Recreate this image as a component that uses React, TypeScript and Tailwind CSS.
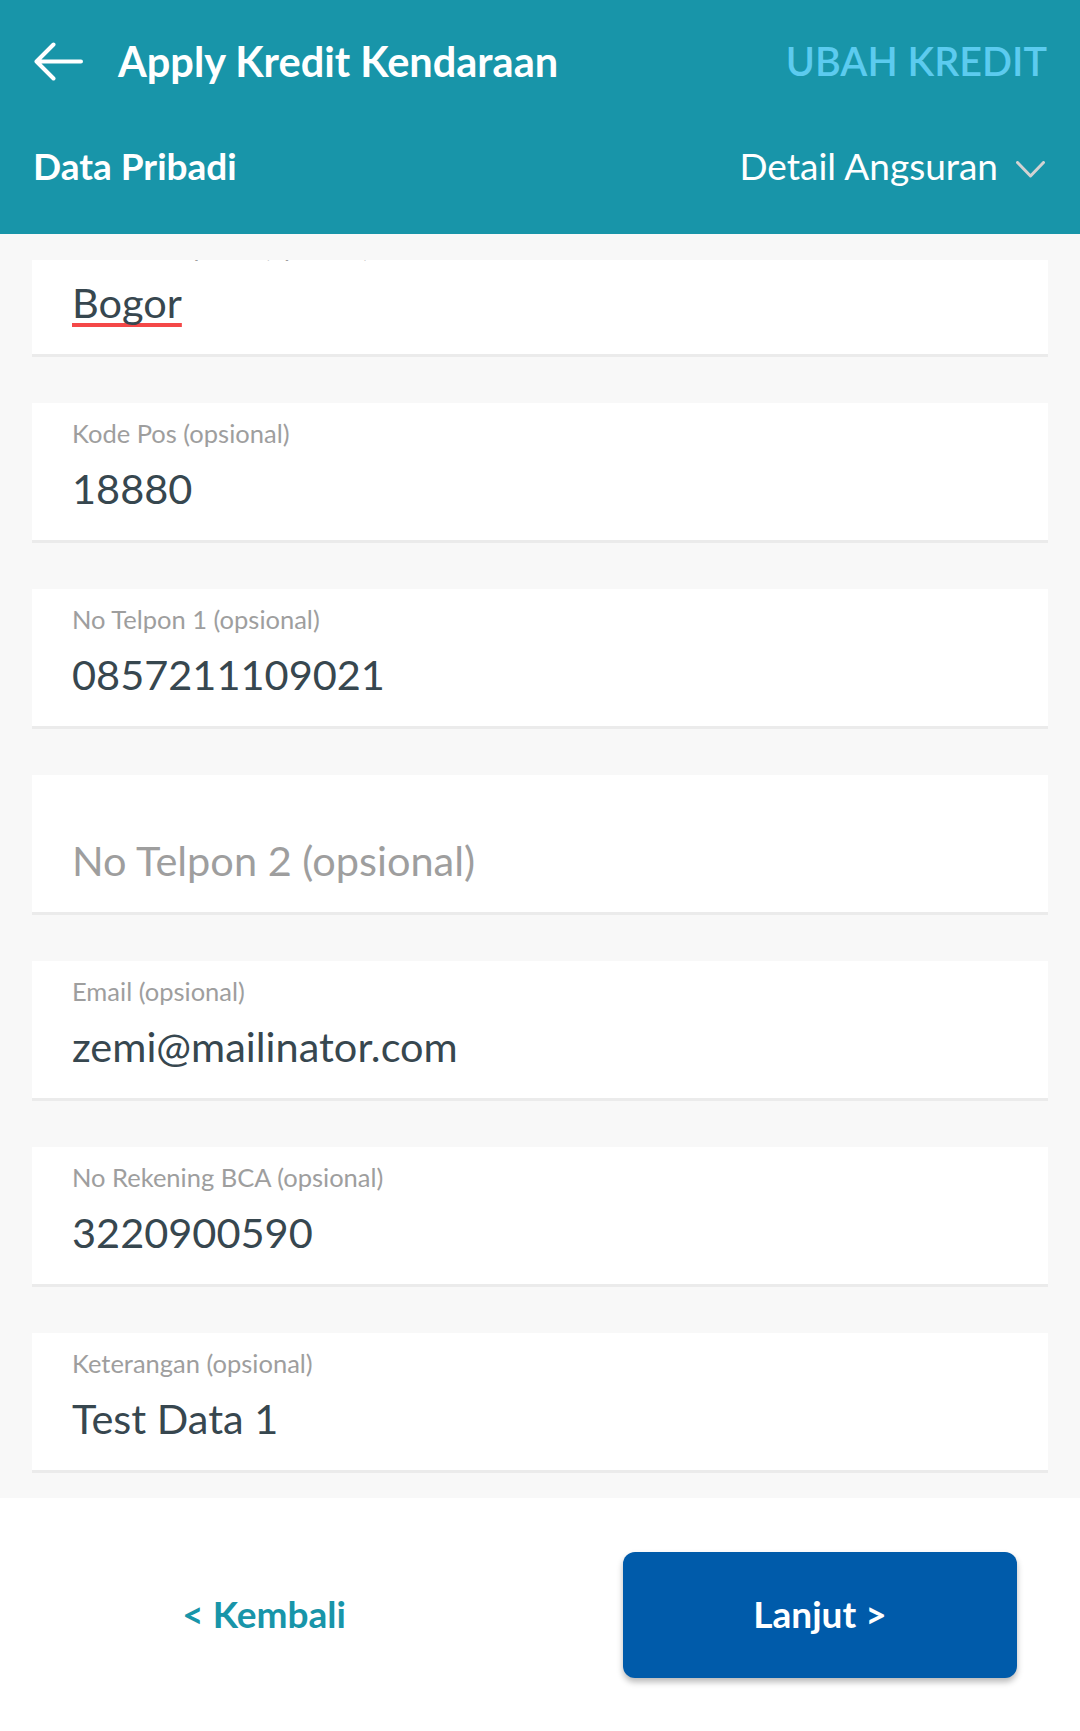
import React from "react";

type Field = {
  label: string;
  value: string;
  placeholder?: boolean;
  spell?: boolean;
};

const fields: Field[] = [
  { label: "Kota/Kabupaten (opsional)", value: "Bogor", spell: true },
  { label: "Kode Pos (opsional)", value: "18880" },
  { label: "No Telpon 1 (opsional)", value: "0857211109021" },
  { label: "", value: "No Telpon 2 (opsional)", placeholder: true },
  { label: "Email (opsional)", value: "zemi@mailinator.com" },
  { label: "No Rekening BCA (opsional)", value: "3220900590" },
  { label: "Keterangan (opsional)", value: "Test Data 1" },
];

function BackArrow() {
  return (
    <svg width="49" height="39" viewBox="0 0 49 39" fill="none">
      <path
        d="M2.5 19.5H47M2.5 19.5L19.5 2.5M2.5 19.5L19.5 36.5"
        stroke="white"
        strokeWidth="4"
        strokeLinecap="round"
        strokeLinejoin="round"
      />
    </svg>
  );
}

function Chevron() {
  return (
    <svg width="29" height="17" viewBox="0 0 29 17" fill="none">
      <path
        d="M1.5 1.5L14.5 15L27.5 1.5"
        stroke="#d2d2d2"
        strokeWidth="3"
        strokeLinecap="round"
        strokeLinejoin="round"
      />
    </svg>
  );
}

function FieldCard({ field }: { field: Field }) {
  return (
    <div className="h-[140px] bg-white border-b-[3px] border-[#ebebeb] pl-[40px] pt-[14px]">
      <div className="h-[32px] text-[25.5px] leading-[32px] text-[#9e9e9e]">
        {field.label}
      </div>
      <div
        className={
          "mt-[14px] text-[41.5px] leading-[50px] " +
          (field.placeholder ? "text-[#9e9e9e]" : "text-[#37474f]")
        }
      >
        {field.spell ? (
          <span className="underline decoration-[#f44848] decoration-[4px] underline-offset-[5px] [text-decoration-skip-ink:none]">
            {field.value}
          </span>
        ) : (
          field.value
        )}
      </div>
    </div>
  );
}

export default function App() {
  return (
    <div className="w-[1080px] h-[1731px] flex flex-col bg-white font-['Lato',sans-serif] overflow-hidden">
      {/* header */}
      <div className="h-[234px] bg-[#1895a9] pt-[36px] text-white">
        <div className="flex items-center h-[50px] pl-[34px] pr-[33px]">
          <BackArrow />
          <div className="ml-[35px] text-[41.5px] leading-[50px] font-bold">
            Apply Kredit Kendaraan
          </div>
          <div className="ml-auto text-[39.5px] leading-[50px] font-semibold text-[#5ccbef]">
            UBAH KREDIT
          </div>
        </div>
        <div className="flex items-center h-[44px] mt-[58px] pl-[33px] pr-[35px]">
          <div className="text-[37px] leading-[44px] font-bold">Data Pribadi</div>
          <div className="ml-auto flex items-center">
            <span className="text-[37px] leading-[44px]">Detail Angsuran</span>
            <span className="ml-[18px] mt-[6px]">
              <Chevron />
            </span>
          </div>
        </div>
      </div>

      {/* form list (scrolled) */}
      <div className="h-[1264px] bg-[#f8f8f8] pt-[26px]">
        <div className="h-[1238px] overflow-hidden">
          <div className="-mt-[43px] flex flex-col gap-[46px] px-[32px]">
            {fields.map((f, i) => (
              <FieldCard key={i} field={f} />
            ))}
          </div>
        </div>
      </div>

      {/* footer */}
      <div className="h-[233px] bg-white flex items-start pt-[54px]">
        <div className="w-[528px] h-[124px] flex items-center justify-center text-[37px] font-bold text-[#1895a9]">
          &lt; Kembali
        </div>
        <button className="ml-[95px] w-[394px] h-[126px] pb-[2px] rounded-[12px] bg-[#005baa] text-white text-[37px] font-bold shadow-[0_4px_6px_rgba(0,0,0,0.28)]">
          Lanjut &gt;
        </button>
      </div>
    </div>
  );
}
